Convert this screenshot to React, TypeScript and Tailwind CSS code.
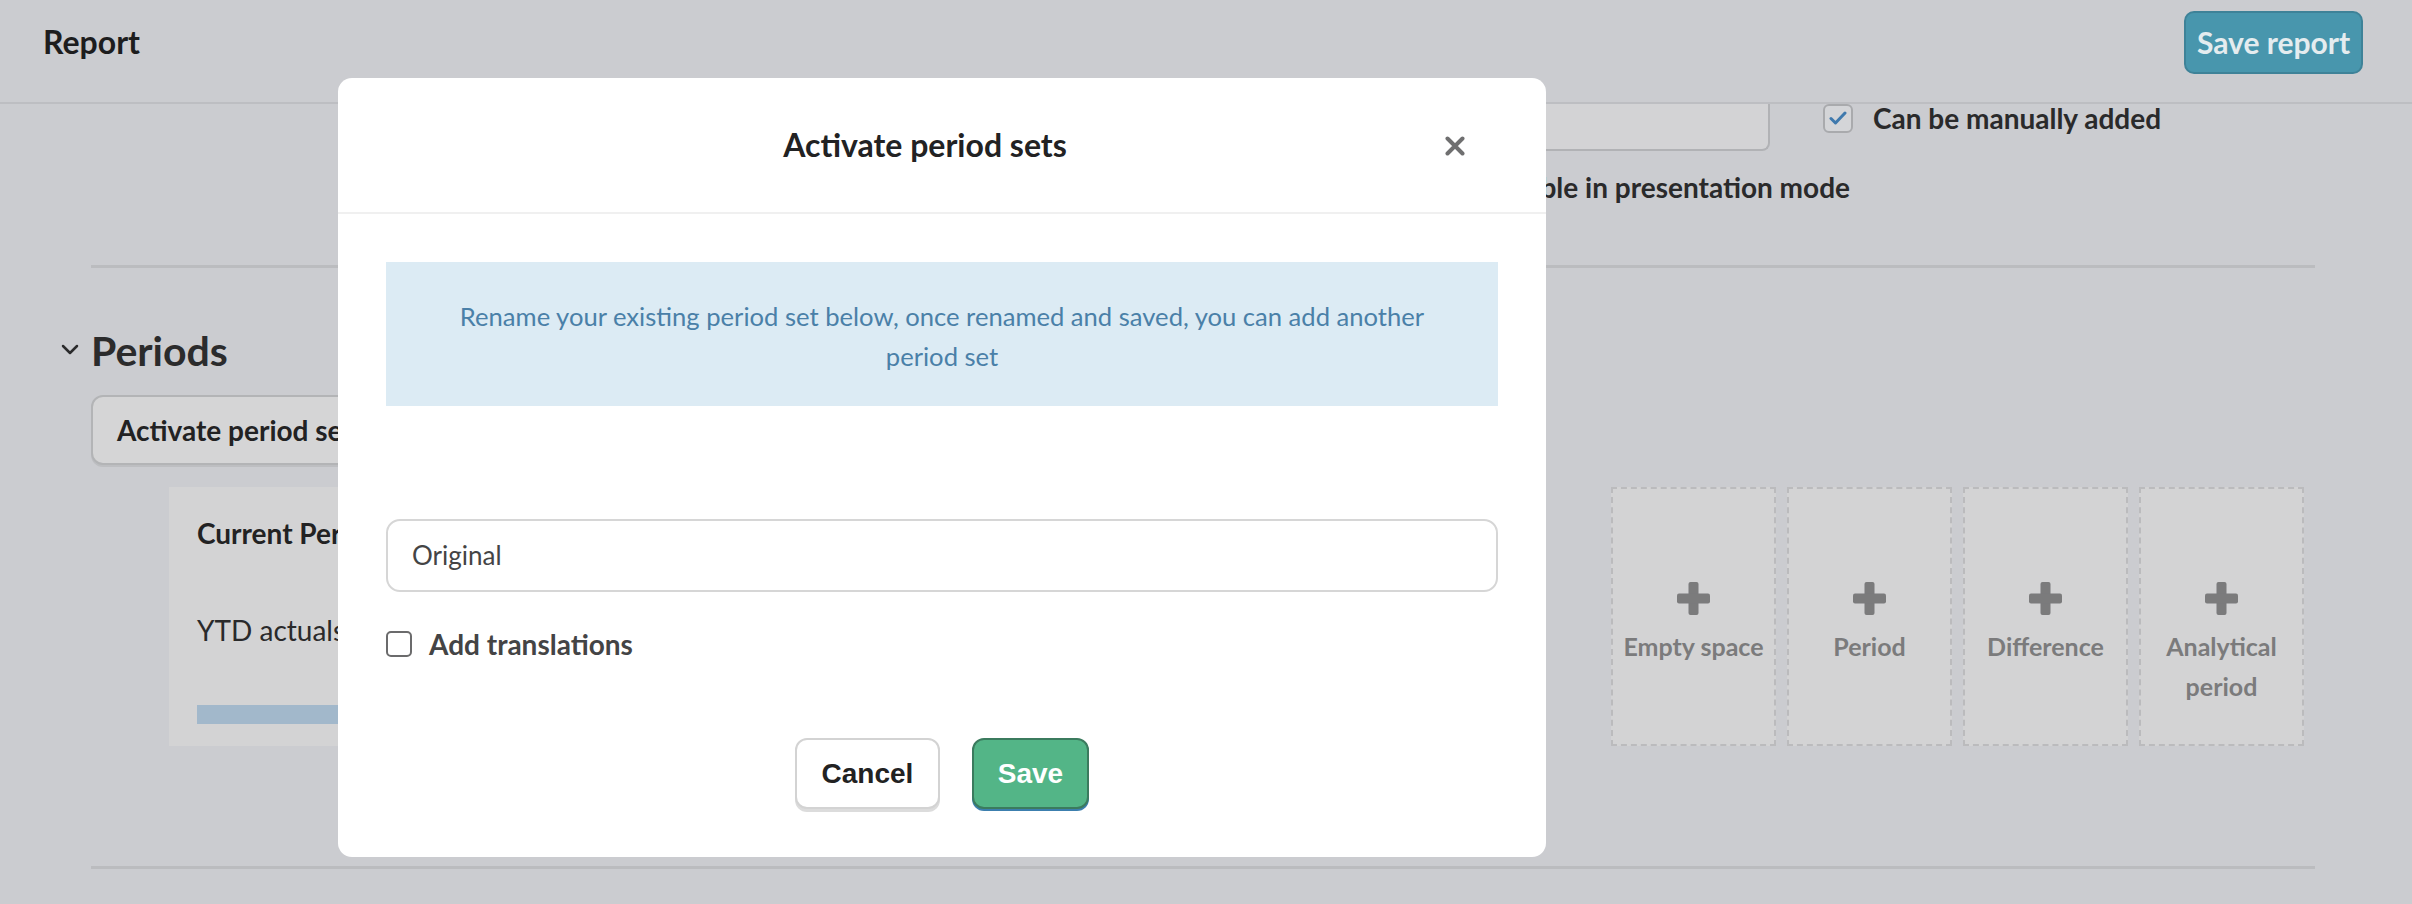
import React from "react";

const lato = { fontFamily: "Lato, 'Noto Sans', sans-serif" };
const arial = { fontFamily: "'Liberation Sans', Arial, sans-serif" };

function Plus() {
  return (
    <svg width="33" height="33" viewBox="0 0 33 33">
      <rect x="11.5" y="0" width="10" height="33" rx="2" fill="#7b7b7c" />
      <rect x="0" y="11.5" width="33" height="10" rx="2" fill="#7b7b7c" />
    </svg>
  );
}

function AddBox({ label }: { label: React.ReactNode }) {
  return (
    <div className="w-[165px] h-[259px] border-2 border-dashed border-[#bbbbbd] bg-[#d3d3d4] flex flex-col items-center pt-[93px]">
      <Plus />
      <div className="mt-[11px] text-[25px] leading-[40px] font-bold text-[#7b7b7c] text-center">
        {label}
      </div>
    </div>
  );
}

export default function App() {
  return (
    <div
      className="relative w-[2412px] h-[904px] overflow-hidden bg-[#cbccd0]"
      style={lato}
    >
      {/* Header */}
      <header className="h-[104px] flex items-center justify-between pl-[43px] pr-[49px] pb-[18px] border-b-2 border-[#bdbec2]">
        <div className="text-[32px] font-bold text-[#1d1d1e]">Report</div>
        <button className="w-[179px] h-[63px] rounded-[10px] bg-[#4896ad] border-2 border-[#3e8298] text-[#e4ecef] text-[30px] font-bold">
          Save report
        </button>
      </header>

      {/* Main content */}
      <main className="pl-[91px] pr-[97px]">
        {/* Row 1 */}
        <div className="flex items-start">
          <div className="w-[1679px] flex justify-end">
            <div className="w-[870px] h-[47px] bg-[#d3d3d5] border-r-2 border-b-2 border-[#b1b2b5] rounded-br-[8px]" />
          </div>
          <div className="ml-[53px] flex items-center h-[28px]">
            <div className="w-[30px] h-[29px] rounded-[6px] border-2 border-[#a9aaad] bg-[#d4d5d8] flex items-center justify-center">
              <svg width="18" height="14" viewBox="0 0 18 14">
                <path
                  d="M2 7.5 L6.5 12 L16 2"
                  fill="none"
                  stroke="#3f79ad"
                  strokeWidth="3"
                  strokeLinecap="round"
                  strokeLinejoin="round"
                />
              </svg>
            </div>
            <span className="ml-[20px] text-[28px] font-bold text-[#2a2a2b]">
              Can be manually added
            </span>
          </div>
        </div>

        {/* Row 2 */}
        <div className="w-[1759px] flex justify-end mt-[18px]">
          <span className="text-[28px] leading-[36px] font-bold text-[#2a2a2b]">
            Visible in presentation mode
          </span>
        </div>

        {/* Separator */}
        <div className="mt-[60px] h-[3px] bg-[#bbbcbf]" />

        {/* Periods */}
        <div className="mt-[59px] flex items-center -ml-[30px]">
          <svg width="18" height="11" viewBox="0 0 18 11" className="mr-[12px] mt-[-4px]">
            <path
              d="M2 2 L9 9 L16 2"
              fill="none"
              stroke="#2b2b2c"
              strokeWidth="2.5"
              strokeLinecap="round"
              strokeLinejoin="round"
            />
          </svg>
          <span className="text-[41px] leading-[48px] font-bold text-[#2b2b2c]">
            Periods
          </span>
        </div>

        <div className="mt-[20px]">
          <button className="h-[70px] px-[24px] rounded-[12px] bg-[#d5d5d6] border-2 border-[#b3b4b6] shadow-[0_2px_0_#bdbec1] text-[28px] font-bold text-[#222223]">
            Activate period sets
          </button>
        </div>

        {/* Cards row */}
        <div className="mt-[22px] flex items-start">
          <div className="ml-[78px] w-[480px] h-[259px] bg-[#d3d3d4] pl-[28px] pt-[28px]">
            <div className="text-[28px] leading-[36px] font-bold text-[#222223]">
              Current Period
            </div>
            <div className="mt-[61px] text-[28px] leading-[36px] text-[#2a2a2b]">
              YTD actuals
            </div>
            <div className="mt-[57px] w-[400px] h-[19px] bg-[#a2b8cb]" />
          </div>
          <div className="ml-auto mr-[11px] flex gap-[11px]">
            <AddBox label="Empty space" />
            <AddBox label="Period" />
            <AddBox label="Difference" />
            <AddBox
              label={
                <>
                  Analytical
                  <br />
                  period
                </>
              }
            />
          </div>
        </div>

        {/* Bottom separator */}
        <div className="mt-[120px] h-[3px] bg-[#bbbcbf]" />
      </main>

      {/* Modal */}
      <div className="absolute left-[338px] top-[78px] w-[1208px] h-[779px] rounded-[14px] bg-white flex flex-col">
        <div className="relative h-[136px] flex items-center justify-center border-b-2 border-[#f0f0f0] shrink-0">
          <h2 className="mr-[34px] text-[32px] font-bold text-[#222223]">
            Activate period sets
          </h2>
          <button className="absolute right-[81px] top-[58px] w-[20px] h-[20px]">
            <svg width="20" height="20" viewBox="0 0 20 20">
              <path
                d="M2.5 2.5 L17.5 17.5 M17.5 2.5 L2.5 17.5"
                stroke="#6f6f70"
                strokeWidth="4"
                strokeLinecap="round"
              />
            </svg>
          </button>
        </div>

        <div className="px-[48px] pt-[48px] flex flex-col">
          <div className="h-[144px] pt-[3px] bg-[#dcebf4] flex items-center justify-center text-center text-[25.6px] leading-[40px] text-[#4a80a8]">
            <p>
              Rename your existing period set below, once renamed and saved, you can add another
              <br />
              period set
            </p>
          </div>

          <div className="mt-[113px] h-[73px] rounded-[14px] border-2 border-[#d6d6d6] flex items-center pl-[24px] text-[26px] text-[#444445]">
            Original
          </div>

          <label className="mt-[31px] flex items-center">
            <span className="w-[26px] h-[26px] rounded-[5px] border-2 border-[#6b6b6c] bg-white" />
            <span className="ml-[17px] text-[28px] font-bold text-[#444445]">
              Add translations
            </span>
          </label>

          <div className="mt-[73px] flex justify-center gap-[32px]" style={arial}>
            <button className="w-[145px] h-[71px] rounded-[12px] bg-white border-2 border-[#d3d3d3] shadow-[0_3px_0_#dcdcdc] text-[28px] font-bold text-[#222222]">
              Cancel
            </button>
            <button className="w-[117px] h-[71px] rounded-[12px] bg-[#53b587] border-2 border-[#3b7b5e] shadow-[0_2px_0_#3c7fae] text-[28px] font-bold text-white">
              Save
            </button>
          </div>
        </div>
      </div>
    </div>
  );
}
